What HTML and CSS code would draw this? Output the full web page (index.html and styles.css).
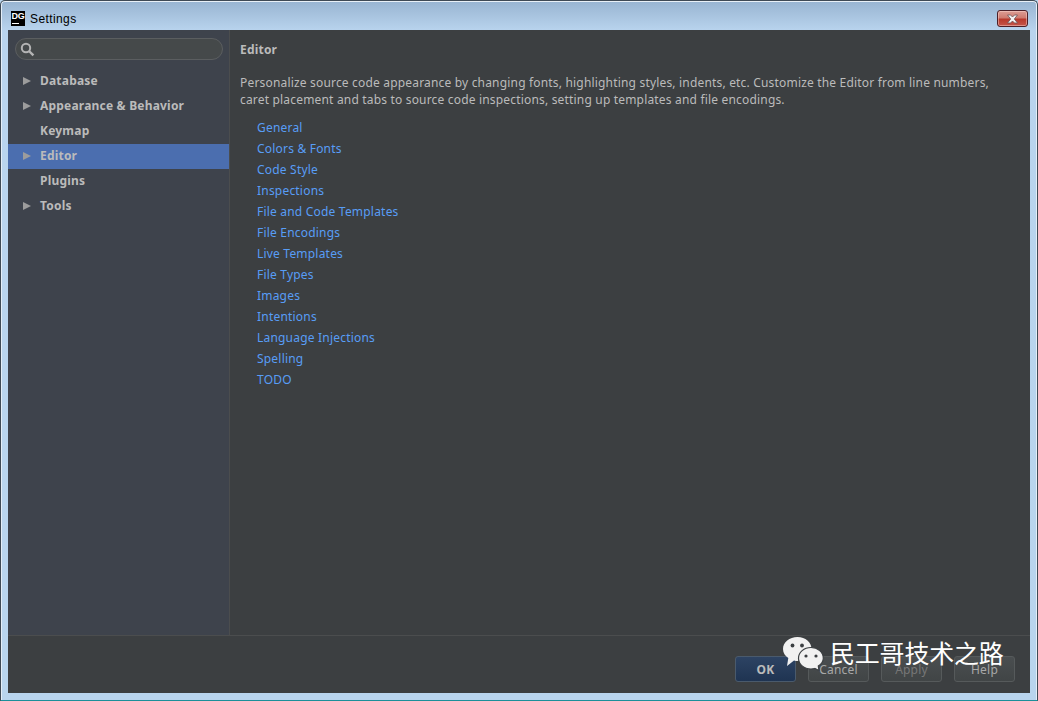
FILE: index.html
```html
<!DOCTYPE html>
<html lang="en">
<head>
<meta charset="utf-8">
<title>Settings</title>
<link rel="stylesheet" href="styles.css">
</head>
<body>
<div class="window">
  <div class="titlebar">
    <div class="app-icon"><span class="app-icon-text">DG</span><span class="app-icon-bar"></span></div>
    <span class="title">Settings</span>
    <button class="close" aria-label="Close">
      <svg width="15" height="10" viewBox="0 0 15 10"><path d="M2.500 1h3l2 2 2-2h3l-3.200 4 3.200 4h-3l-2-2-2 2h-3l3.200-4z" fill="#f4f2f2" stroke="#6b5458" stroke-width=".8"/></svg>
    </button>
  </div>
  <div class="client">
    <div class="main">
      <aside class="sidebar">
        <div class="search">
          <svg width="15" height="15" viewBox="0 0 15 15"><circle cx="6" cy="6" r="4.200" fill="none" stroke="#b4b4b4" stroke-width="2"/><path d="M9 9l4.400 4.400" stroke="#b4b4b4" stroke-width="2.400"/></svg>
        </div>
        <ul class="tree">
          <li class="node"><span class="arrow"></span>Database</li>
          <li class="node"><span class="arrow"></span>Appearance &amp; Behavior</li>
          <li class="node"><span class="no-arrow"></span>Keymap</li>
          <li class="node selected"><span class="arrow"></span>Editor</li>
          <li class="node"><span class="no-arrow"></span>Plugins</li>
          <li class="node"><span class="arrow"></span>Tools</li>
        </ul>
      </aside>
      <main class="content">
        <h1 class="heading">Editor</h1>
        <p class="desc">Personalize source code appearance by changing fonts, highlighting styles, indents, etc. Customize the Editor from line numbers, caret placement and tabs to source code inspections, setting up templates and file encodings.</p>
        <ul class="links">
          <li>General</li>
          <li>Colors &amp; Fonts</li>
          <li>Code Style</li>
          <li>Inspections</li>
          <li>File and Code Templates</li>
          <li>File Encodings</li>
          <li>Live Templates</li>
          <li>File Types</li>
          <li>Images</li>
          <li>Intentions</li>
          <li>Language Injections</li>
          <li>Spelling</li>
          <li>TODO</li>
        </ul>
      </main>
    </div>
    <footer class="footer">
      <button class="btn primary">OK</button>
      <button class="btn">Cancel</button>
      <button class="btn disabled">Apply</button>
      <button class="btn">Help</button>
    </footer>
    <div class="watermark">
      <svg class="wechat" width="42" height="34" viewBox="0 0 42 34">
        <path d="M14.500 0C6.500 0 0 5.200 0 12c0 3.800 2.100 6.900 5.300 9.100L4 29l7-5.500c1.500.4 2 .6 3.500.6 8 0 14-5.400 14-12.100S22.500 0 14.500 0z" fill="#f1f1f1"/>
        <circle cx="9.500" cy="8.500" r="1.900" fill="#3b3f42"/><circle cx="19" cy="8.500" r="1.900" fill="#3b3f42"/>
        <path d="M28 10.500c-7 0-12.500 4.700-12.500 10.700S21 32 28 32c1.300 0 2.600-.2 3.800-.5l4.200 2-.7-4.500c3-1.900 5-4.400 5-7.800 0-6-5.500-10.700-12.300-10.700z" fill="#f1f1f1" stroke="#3b3f42" stroke-width="1.200"/>
        <circle cx="23" cy="19" r="1.600" fill="#3b3f42"/><circle cx="33" cy="19" r="1.600" fill="#3b3f42"/>
      </svg>
      <span class="wm-text">民工哥技术之路</span>
    </div>
  </div>
</div>
</body>
</html>
```
FILE: styles.css
```css
* { box-sizing: border-box; }
html, body { margin: 0; padding: 0; width: 1038px; height: 701px; overflow: hidden; background: #b9d5ee; }
ul { list-style: none; margin: 0; padding: 0; }
.window {
  width: 1038px; height: 701px; display: flex; flex-direction: column;
  background: linear-gradient(180deg, #98b4d1 0, #b9d4ee 30px, #b9d5ee 100%);
  border: 1px solid #3f4a55; border-bottom-color: #1c8f9a; border-radius: 5px 5px 0 0;
  padding: 0 7px 7px 7px;
  box-shadow: inset 0 1px 0 #e9f0f7, inset 1px 0 0 #e4eef8, inset -1px 0 0 #e4eef8;
}
.titlebar { height: 29px; flex: none; display: flex; align-items: center; padding: 0 0 0 3px; }
.app-icon { width: 14px; height: 15px; padding-top: 1px; background: #000; display: flex; flex-direction: column; align-items: center; flex: none; margin-top: 5px; overflow: hidden; }
.app-icon-text { font: bold 9px/9px "Liberation Sans", sans-serif; color: #fff; letter-spacing: -.3px; }
.app-icon-bar { width: 7px; height: 1px; background: #fff; margin: 2px 0 0 -5px; }
.title { font: 12px/14px "Liberation Sans", sans-serif; letter-spacing: .4px; color: #000; margin-left: 5px; margin-top: 6px; flex: 1; }
.close {
  width: 31px; height: 17px; margin: 6px 2px 0 0; padding: 0; display: flex; align-items: center; justify-content: center;
  border: 1px solid #4c2028; border-radius: 3px;
  background: linear-gradient(180deg, #dc9d94 0, #cf7b70 45%, #b8392c 55%, #c5564a 100%);
  box-shadow: inset 0 0 0 1px rgba(255,220,215,.45);
}
.client { flex: 1; min-height: 0; position: relative; display: flex; flex-direction: column; background: #3c3f41; color: #bbbbbb; font-family: "Noto Sans", sans-serif; letter-spacing: .2px; }
.main { flex: 1; min-height: 0; display: flex; }
.sidebar { width: 222px; flex: none; background: #3e434c; border-right: 1px solid #4b4d4e; padding-top: 8px; }
.search {
  margin: 0 6px 0 7px; height: 22px; border: 1px solid #5b5e60; border-radius: 11px; background: #45494a;
  display: flex; align-items: center; padding-left: 4px;
}
.tree { margin-top: 9px; }
.node { height: 25px; padding-bottom: 2px; display: flex; align-items: center; font-size: 12px; font-weight: bold; color: #bbbbbb; white-space: nowrap; }
.arrow { width: 0; height: 0; margin: 0 9px 0 15px; border-left: 8px solid #9c9c9c; border-top: 4.500px solid transparent; border-bottom: 4.500px solid transparent; flex: none; }
.no-arrow { width: 32px; flex: none; }
.selected { background: #4b6eaf; }
.content { flex: 1; min-width: 0; padding: 12px 32px 0 10px; font-size: 12px; }
.heading { margin: 0; font-size: 12px; line-height: 15px; font-weight: bold; color: #bbbbbb; }
.desc { margin: 17px 0 0; line-height: 17px; color: #bbbbbb; letter-spacing: .18px; }
.links { margin: 9px 0 0 17px; }
.links li { height: 21px; line-height: 21px; color: #589df6; }
.footer { height: 58px; flex: none; border-top: 1px solid #4b4d4e; display: flex; justify-content: flex-end; align-items: flex-start; gap: 12px; padding: 20px 15px 0 0; }
.btn {
  width: 61px; height: 26px; padding: 0; border: 1px solid #565a5b; border-radius: 3px;
  background: linear-gradient(180deg, #4a4e50, #414546);
  color: #a8a8a8; font: 12px "Noto Sans", sans-serif; letter-spacing: .2px;
}
.primary { background: linear-gradient(180deg, #2d4363, #1f3452); border-color: #4a5a6c; font-weight: bold; color: #bbbbbb; }
.disabled { color: #777777; }
.watermark { position: absolute; left: 775px; top: 607px; display: flex; align-items: flex-start; }
.wechat { flex: none; }
.wm-text { font: 25px/34px "Noto Sans CJK SC", sans-serif; letter-spacing: -.2px; color: #ffffff; margin: -2px 0 0 5px; white-space: nowrap; }
```
